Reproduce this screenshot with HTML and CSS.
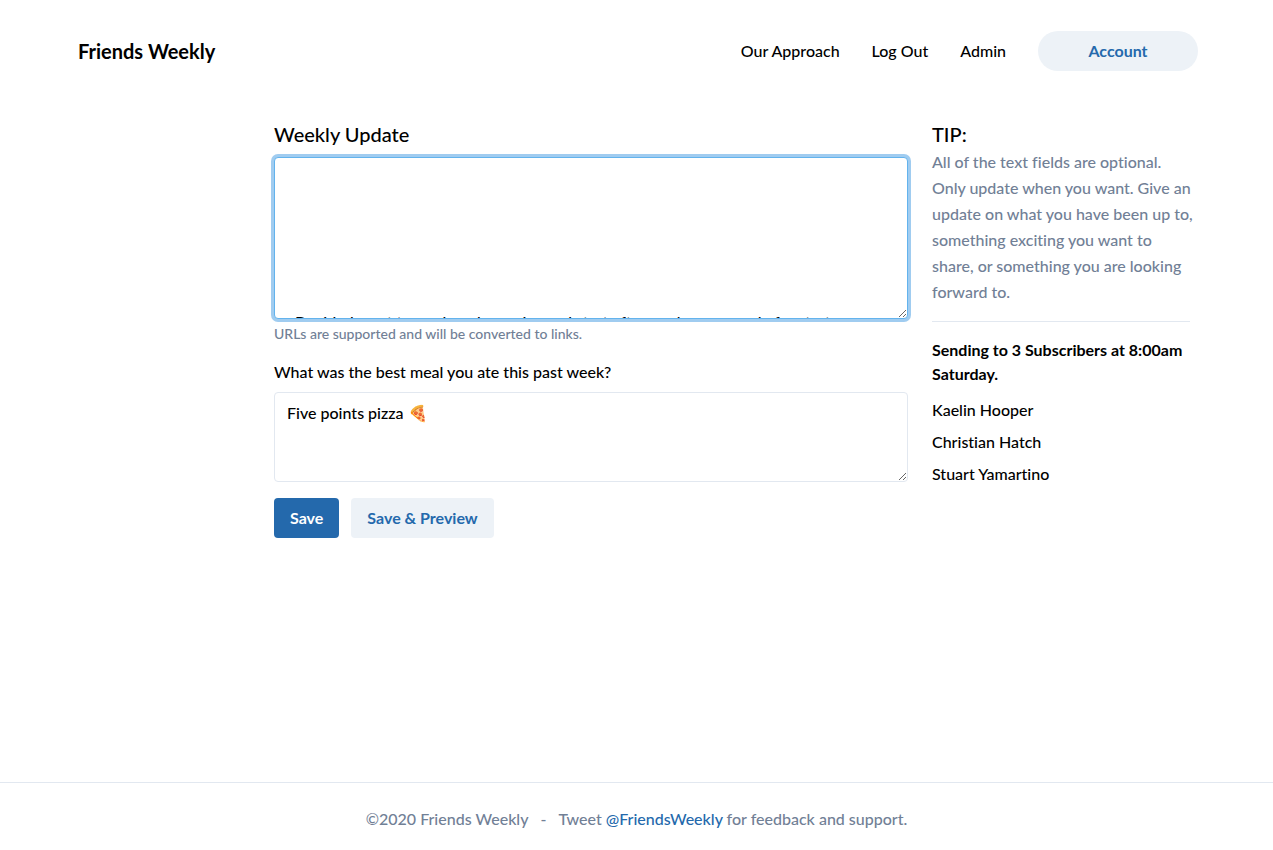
FILE: index.html
```html
<!DOCTYPE html>
<html lang="en">
<head>
    <meta charset="UTF-8">
    <meta name="viewport" content="width=device-width, initial-scale=1">
    <title>Friends Weekly</title>
    <link rel="stylesheet" href="styles.css">
</head>
<body>

<header class="header">
    <a class="logo" href="#">Friends Weekly</a>
    <nav class="nav">
        <a href="#">Our Approach</a>
        <a href="#">Log Out</a>
        <a href="#">Admin</a>
        <a class="account" href="#">Account</a>
    </nav>
</header>

<main class="content">
    <form class="update">
        <label class="title" for="weekly">Weekly Update</label>
        <textarea class="field weekly" id="weekly">






  Decided want to work and exercise and start after work on a couple for start</textarea>
        <p class="hint">URLs are supported and will be converted to links.</p>

        <label class="question" for="meal">What was the best meal you ate this past week?</label>
        <textarea class="field meal" id="meal">Five points pizza 🍕</textarea>

        <div class="actions">
            <button class="btn primary" type="submit">Save</button>
            <button class="btn" type="button">Save &amp; Preview</button>
        </div>
    </form>

    <aside class="side">
        <h2 class="title">TIP:</h2>
        <p class="tip">
            All of the text fields are optional.<br>
            Only update when you want. Give an<br>
            update on what you have been up to,<br>
            something exciting you want to<br>
            share, or something you are looking<br>
            forward to.
        </p>
        <h3 class="sending">Sending to 3 Subscribers at 8:00am Saturday.</h3>
        <ul class="subscribers">
            <li>Kaelin Hooper</li>
            <li>Christian Hatch</li>
            <li>Stuart Yamartino</li>
        </ul>
    </aside>
</main>

<footer class="footer">
    <span>©2020 Friends Weekly</span>
    <span>-</span>
    <span>Tweet <a href="#">@FriendsWeekly</a> for feedback and support.</span>
</footer>

</body>
</html>
```
FILE: styles.css
```css
* {
    box-sizing: border-box;
    margin: 0;
    padding: 0;
}

body {
    display: flex;
    flex-direction: column;
    min-height: 100vh;
    font-family: Lato, sans-serif;
    font-size: 16px;
    font-weight: 500;
    font-variant-ligatures: none;
    line-height: 24px;
    color: #000;
    background: #fff;
}

a {
    color: inherit;
    text-decoration: none;
}

.header {
    display: flex;
    align-items: center;
    justify-content: space-between;
    width: 100%;
    max-width: 1280px;
    margin: 0 auto;
    padding: 31px 75px 31px 78px;
}

.logo {
    font-size: 20px;
    font-weight: 700;
}

.nav {
    display: flex;
    align-items: center;
    gap: 32px;
}

.account {
    width: 160px;
    padding: 8px;
    border-radius: 20px;
    font-weight: 700;
    text-align: center;
    color: #2469ac;
    background: #edf2f7;
}

.content {
    display: grid;
    grid-template-columns: minmax(0, 1fr) 258px;
    gap: 24px;
    flex: 1;
    width: 100%;
    padding: 17px 83px 24px 274px;
}

.update {
    display: flex;
    flex-direction: column;
}

.title {
    font-size: 20px;
    font-weight: 500;
    line-height: 30px;
}

.field {
    display: block;
    width: 100%;
    padding: 8px 12px;
    border: 1px solid #e2e8f0;
    border-radius: 4px;
    outline: none;
    overflow: hidden;
    resize: vertical;
    font: inherit;
    color: #000;
    background: #fff;
}

.weekly {
    height: 162px;
    margin-top: 8px;
    border-color: #63b3ed;
    box-shadow: 0 0 0 3px rgba(66, 153, 225, 0.5);
}

.hint {
    margin-top: 5px;
    font-size: 14px;
    line-height: 20px;
    color: #718096;
}

.question {
    margin-top: 16px;
}

.meal {
    height: 90px;
    margin-top: 8px;
}

.actions {
    display: flex;
    gap: 12px;
    margin-top: 16px;
}

.btn {
    padding: 8px 16px;
    border: none;
    border-radius: 4px;
    font: inherit;
    font-weight: 700;
    color: #2469ac;
    background: #edf2f7;
    cursor: pointer;
}

.primary {
    color: #fff;
    background: #2469ac;
}

.tip {
    padding-bottom: 16px;
    border-bottom: 1px solid #e2e8f0;
    line-height: 26px;
    white-space: nowrap;
    color: #718096;
}

.sending {
    margin-top: 16px;
    font-size: 16px;
    font-weight: 700;
}

.subscribers {
    margin-top: 12px;
    list-style: none;
}

.subscribers li {
    margin-bottom: 8px;
}

.footer {
    display: flex;
    justify-content: center;
    gap: 12px;
    padding: 24px 0 19px;
    border-top: 1px solid #e2e8f0;
    color: #718096;
}

.footer a {
    color: #2469ac;
}
```
